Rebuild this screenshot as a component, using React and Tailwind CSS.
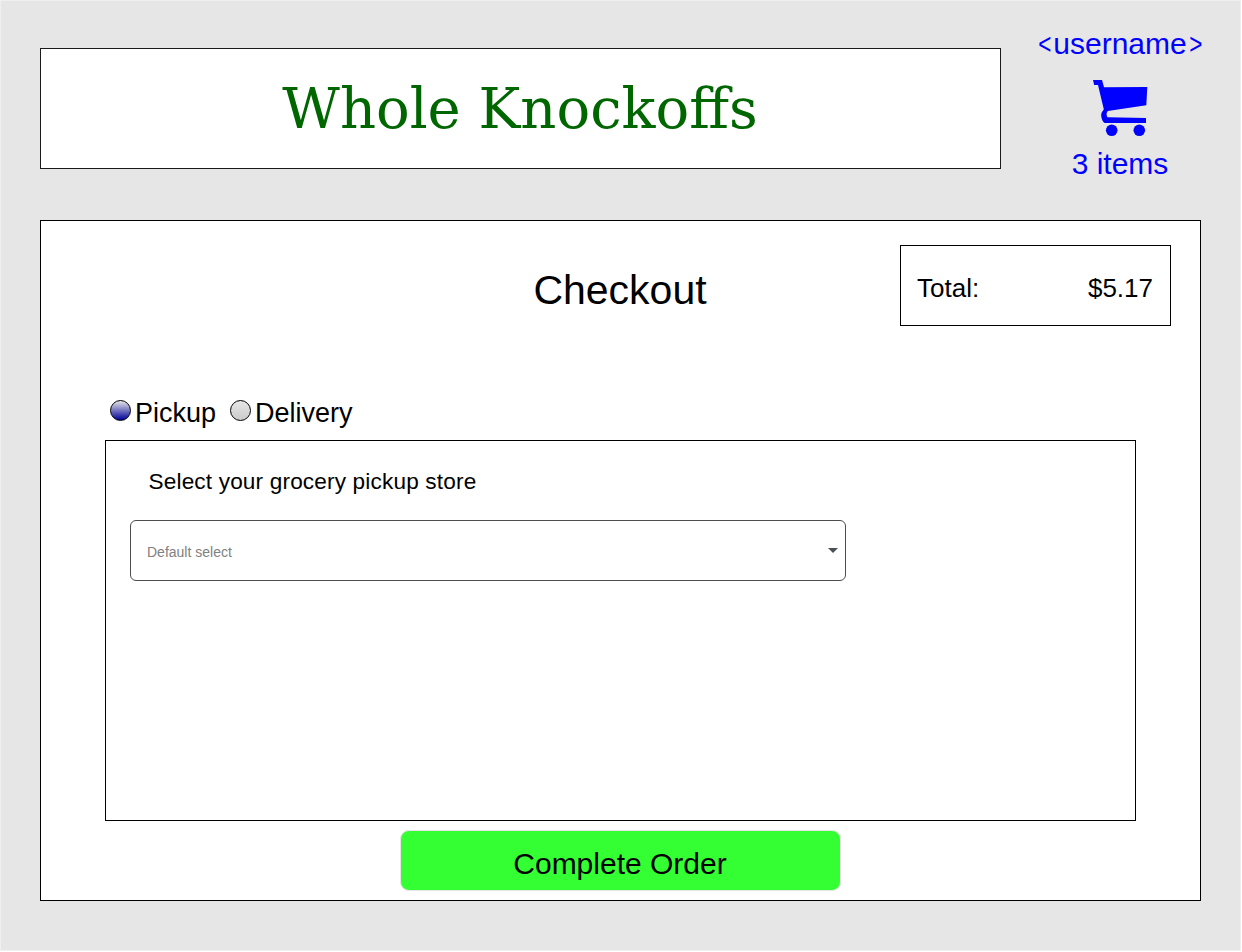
function CartIcon() {
  return (
    <svg className="block h-[60px] w-[60px]" viewBox="0 0 60 60" fill="#0000ff">
      <path d="M3 0H12L14 7.2L57.3 7L56.3 25.3L17.8 31C16.5 32.5 16 34.500 17.400 37.200L56 38V43H14.800C12.500 42 11 37.500 11.200 34.500C11.500 32 13 31 13.800 29.300L8 5H4.200Z" />
      <circle cx="21.700" cy="50.300" r="5.800" />
      <circle cx="49.300" cy="50.300" r="5.800" />
    </svg>
  );
}

function Radio({ checked, label, className }) {
  return (
    <label className={"flex items-start " + className}>
      <span
        className={
          "h-[21px] w-[21px] shrink-0 rounded-full border border-black bg-linear-to-b/srgb " +
          (checked ? "from-[#e6e6e6] to-[#000099]" : "from-[#e6e6e6] to-[#cccccc]")
        }
      />
      <span className="ml-1 mt-[-2px] text-[27px] leading-[31px]">{label}</span>
    </label>
  );
}

export default function App() {
  return (
    <div className="h-[952px] w-[1242px] overflow-hidden bg-white font-['Nimbus_Sans','Liberation_Sans',sans-serif] whitespace-nowrap text-black">
      <div className="h-[951px] w-[1241px] border border-[#f0f0f0] bg-[#e6e6e6] pl-[39px]">
        <header className="flex h-[219px]">
          <div className="mt-[47px] flex h-[121px] w-[961px] items-center justify-center border border-[#1a1a1a] bg-white pr-px">
            <h1 className="font-['DejaVu_Serif',serif] text-[56px] leading-[66px] text-[#006600]">
              Whole Knockoffs
            </h1>
          </div>
          <div className="ml-[29px] flex w-[180px] flex-col items-center pt-[26px] text-[30px] leading-[34px] text-[#0000ff]">
            <a>
              <span className="inline-block scale-x-75">&lt;</span>username
              <span className="inline-block scale-x-75">&gt;</span>
            </a>
            <div className="mt-[19px]">
              <CartIcon />
            </div>
            <a className="mt-[7px]">3 items</a>
          </div>
        </header>
        <main className="h-[681px] w-[1161px] border border-black bg-white">
          <div className="grid h-[179px] grid-cols-[485px_188px_1fr] items-start">
            <h2 className="col-start-2 mt-[46px] text-center text-[41px] leading-[47px]">Checkout</h2>
            <div className="mr-[29px] ml-[186px] mt-6 flex h-[81px] items-center justify-between border border-black pt-1.5 pr-[17px] pl-4 text-[26px]">
              <span>Total:</span>
              <span>$5.17</span>
            </div>
          </div>
          <div className="flex h-10 pl-[69px]">
            <Radio checked label="Pickup" className="w-[120px]" />
            <Radio label="Delivery" className="w-[130px]" />
          </div>
          <section className="ml-16 h-[381px] w-[1031px] border border-black pl-6 pt-7">
            <p className="pl-[18.500px] text-[22.600px] leading-[26px] tracking-[0.160px]">
              Select your grocery pickup store
            </p>
            <div className="mt-[25px] flex h-[61px] w-[716px] items-center justify-between rounded-[6px] border border-[#4d4d4d] pr-[7px] pl-4 text-sm text-[#808080]">
              <span className="pt-[2px]">Default select</span>
              <svg className="h-[5px] w-[10px]" viewBox="0 0 10 5" fill="#495057">
                <path d="M0 0H10L5 5Z" />
              </svg>
            </div>
          </section>
          <button className="mt-[9px] ml-[359px] flex h-[61px] w-[441px] items-center justify-center rounded-[9px] border border-[#e6e6e6] bg-[#33ff33] pt-[5px] pr-px text-[30px]">
            Complete Order
          </button>
        </main>
      </div>
    </div>
  );
}
